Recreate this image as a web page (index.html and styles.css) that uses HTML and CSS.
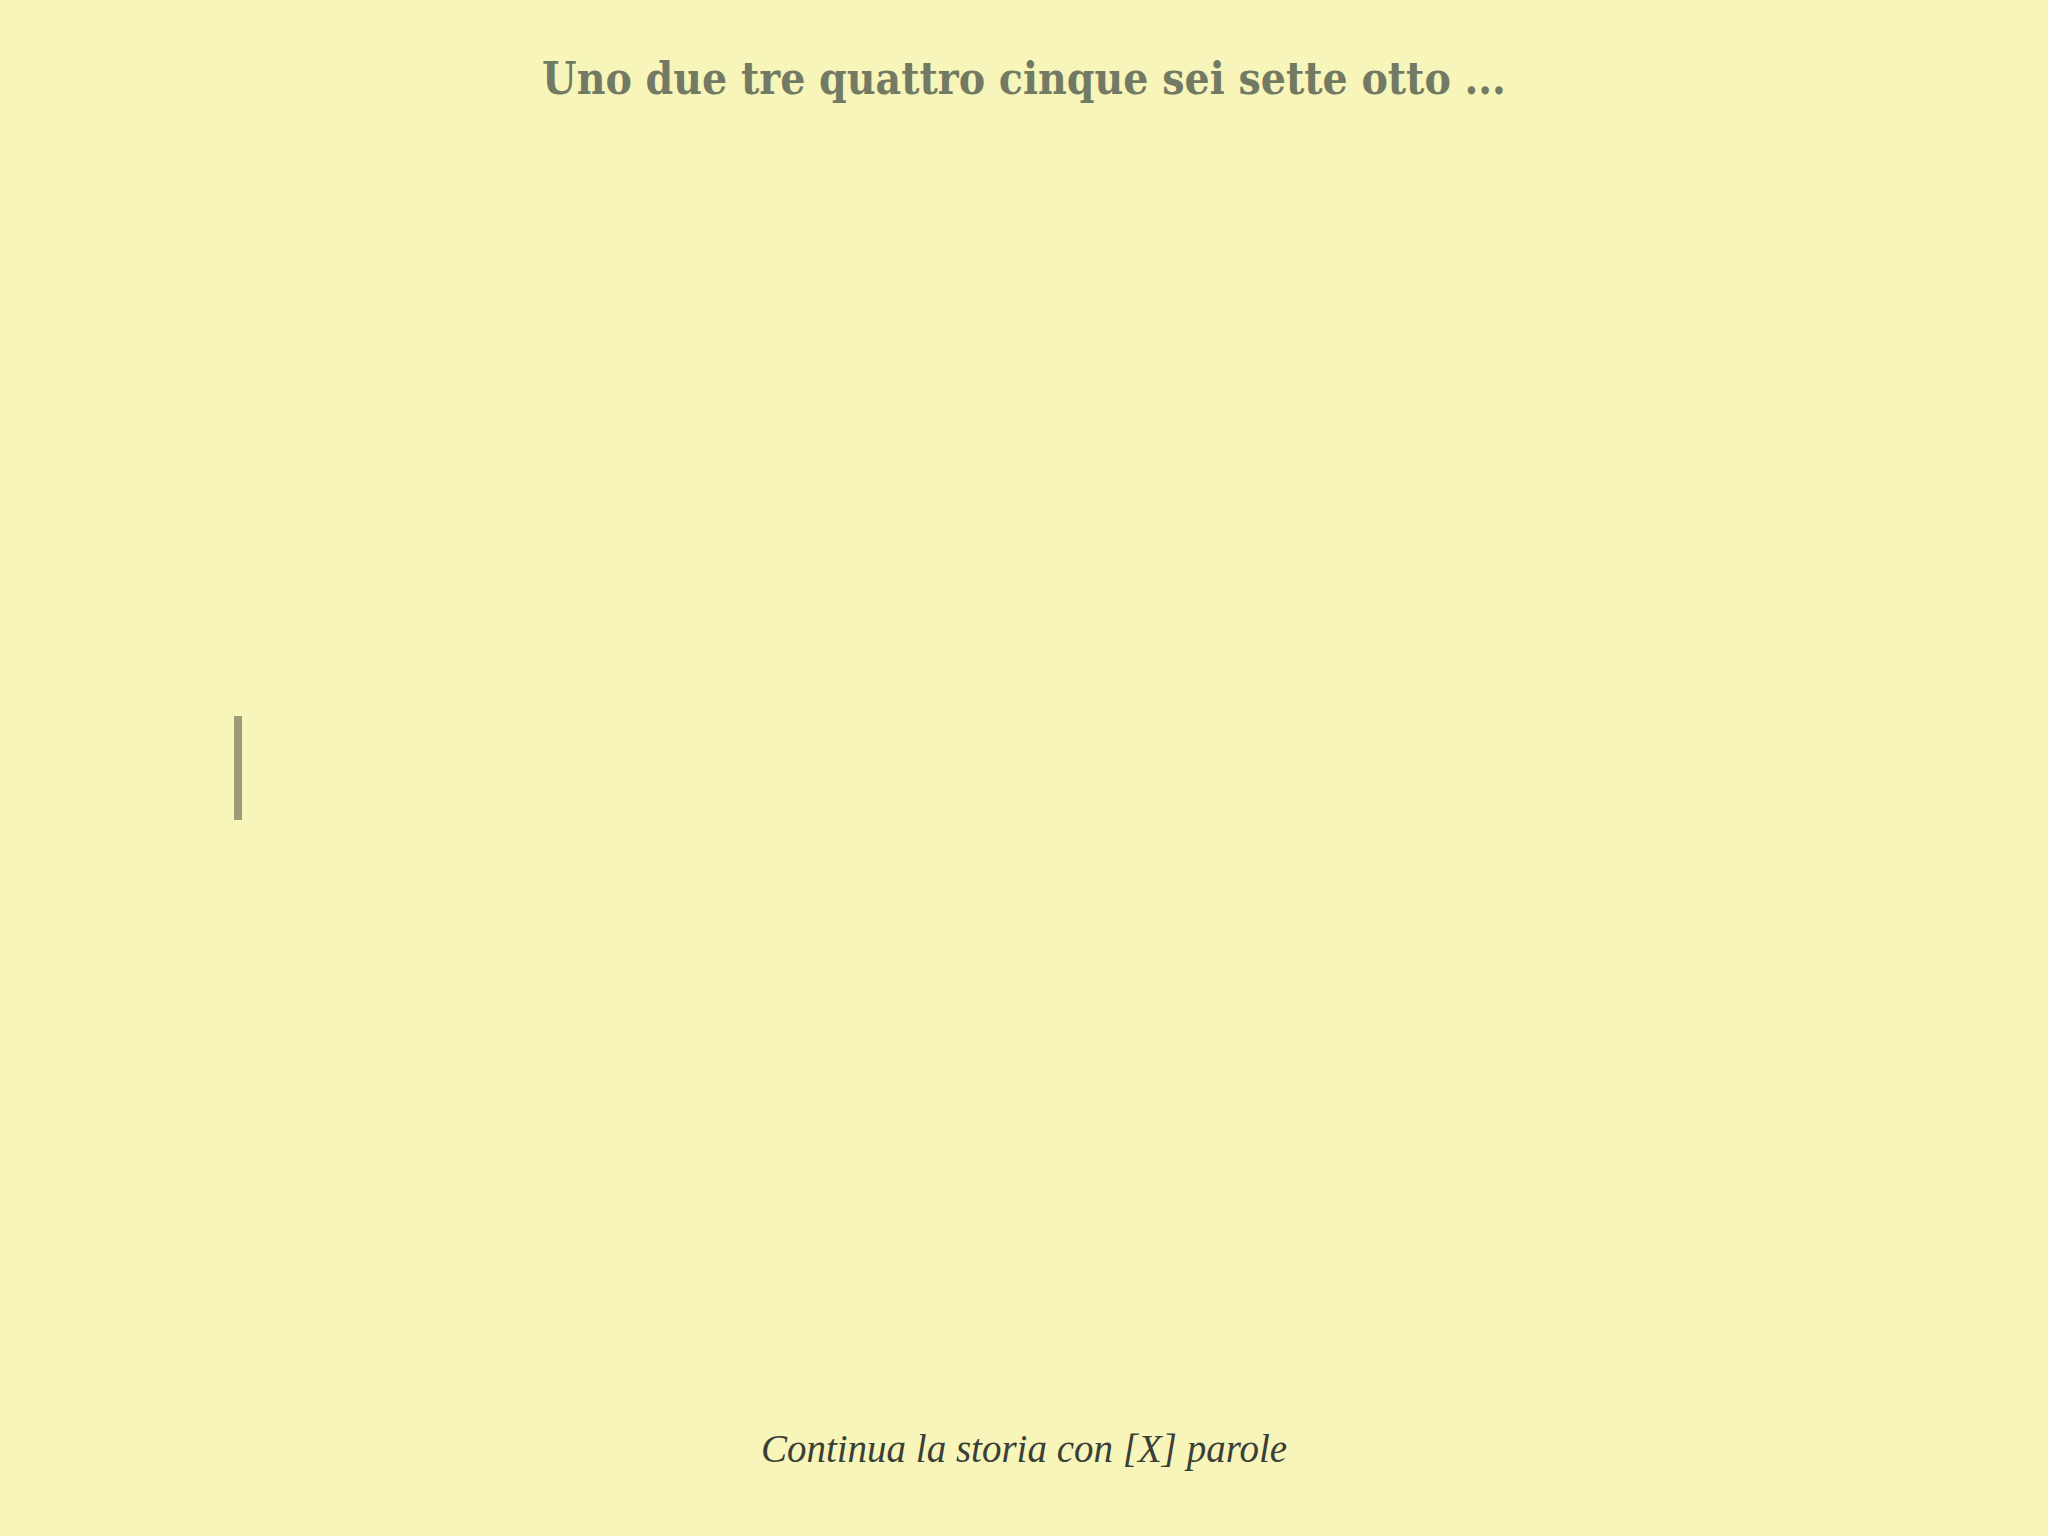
FILE: index.html
```html
<!DOCTYPE html>
<html lang="it">
<head>
<meta charset="utf-8">
<title>Storia</title>
<link rel="stylesheet" href="styles.css">
</head>
<body>
<div class="page">
  <h1 class="prompt">Uno due tre quattro cinque sei sette otto ...</h1>
  <main class="editor">
    <div class="caret"></div>
  </main>
  <footer class="hint">Continua la storia con [X] parole</footer>
</div>
</body>
</html>
```
FILE: styles.css
```css
html, body {
  margin: 0;
  padding: 0;
  background: #f7f5b9;
}
.page {
  height: 1536px;
  display: flex;
  flex-direction: column;
  align-items: stretch;
}
.prompt {
  margin: 0;
  padding-top: 49px;
  text-align: center;
  font-family: "DejaVu Serif Condensed", "Liberation Serif", serif;
  font-weight: bold;
  font-size: 44px;
  line-height: 60px;
  color: #737a63;
}
.editor {
  flex: 1;
  display: flex;
  align-items: center;
  padding-left: 234px;
}
.caret {
  width: 8px;
  height: 104px;
  margin-top: 3px;
  background: #9c9a78;
}
.hint {
  text-align: center;
  font-family: "Liberation Serif", serif;
  font-style: italic;
  font-size: 39px;
  line-height: 50px;
  color: #3a3f38;
  padding-bottom: 62px;
}
```
